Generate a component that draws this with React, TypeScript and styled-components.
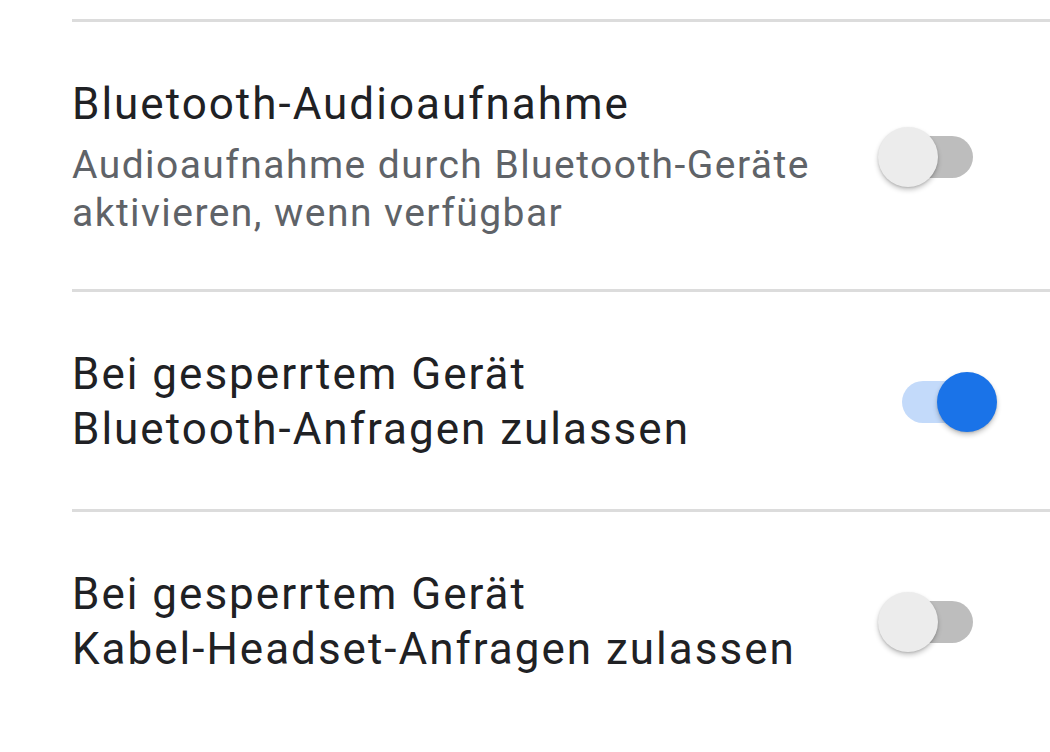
import styled, { createGlobalStyle } from "styled-components";

const GlobalStyle = createGlobalStyle`
    html, body {
        margin: 0;
        padding: 0;
        background: #ffffff;
    }
    body {
        font-family: Roboto, "Noto Sans", "Liberation Sans", sans-serif;
        -webkit-font-smoothing: antialiased;
    }
`

type Setting = {
    title: string[];
    summary?: string[];
    on: boolean;
};

const settings: Setting[] = [
    {
        title: ["Bluetooth-Audioaufnahme"],
        summary: ["Audioaufnahme durch Bluetooth-Geräte", "aktivieren, wenn verfügbar"],
        on: false,
    },
    {
        title: ["Bei gesperrtem Gerät", "Bluetooth-Anfragen zulassen"],
        on: true,
    },
    {
        title: ["Bei gesperrtem Gerät", "Kabel-Headset-Anfragen zulassen"],
        on: false,
    },
];

const Toggle = ({on}: { on: boolean }) => {
    return (
        <Switch>
            <Track $on={on}/>
            <Thumb $on={on}/>
        </Switch>
    );
};

export default function App() {
    return (
        <>
            <GlobalStyle/>
            <Screen>
                <List>
                    {settings.map((s, i) => (
                        <Row key={i}>
                            <TextBlock>
                                <Title>
                                    {s.title.map((line, j) => (
                                        <Line key={j}>{line}</Line>
                                    ))}
                                </Title>
                                {s.summary && (
                                    <Summary>
                                        {s.summary.map((line, j) => (
                                            <Line key={j}>{line}</Line>
                                        ))}
                                    </Summary>
                                )}
                            </TextBlock>
                            <Toggle on={s.on}/>
                        </Row>
                    ))}
                </List>
            </Screen>
        </>
    );
}

const Screen = styled.div`
    width: 1050px;
    height: 752px;
    overflow: hidden;
    background: #ffffff;
    padding-top: 19px;
    box-sizing: border-box;
`

const List = styled.div`
    margin-left: 72px;
    display: flex;
    flex-direction: column;
`

const Row = styled.div`
    border-top: 3px solid #dcdcdc;
    display: flex;
    align-items: center;
    justify-content: space-between;
    padding: 55px 53px 52px 0;
    min-height: 110px;
`

const TextBlock = styled.div`
    display: flex;
    flex-direction: column;
    gap: 9px;
`

const Title = styled.div`
    font-size: 44px;
    line-height: 55px;
    letter-spacing: 2px;
    color: #202124;
`

const Summary = styled.div`
    font-size: 39px;
    line-height: 48px;
    letter-spacing: 1.45px;
    color: #5f6368;
`

const Line = styled.div`
    white-space: nowrap;
`

const Switch = styled.div`
    position: relative;
    width: 120px;
    height: 62px;
    flex-shrink: 0;
`

const Track = styled.div<{ $on: boolean }>`
    position: absolute;
    left: 25px;
    right: 24px;
    top: 10px;
    height: 42px;
    border-radius: 21px;
    background: ${p => p.$on ? "#c3dafa" : "#bdbdbd"};
`

const Thumb = styled.div<{ $on: boolean }>`
    position: absolute;
    top: 1px;
    left: ${p => p.$on ? "60px" : "1px"};
    width: 60px;
    height: 60px;
    border-radius: 50%;
    background: ${p => p.$on ? "#1a73e8" : "#ececec"};
    box-shadow: 0 3px 5px rgba(0, 0, 0, 0.22), 0 1px 2px rgba(0, 0, 0, 0.12);
`
